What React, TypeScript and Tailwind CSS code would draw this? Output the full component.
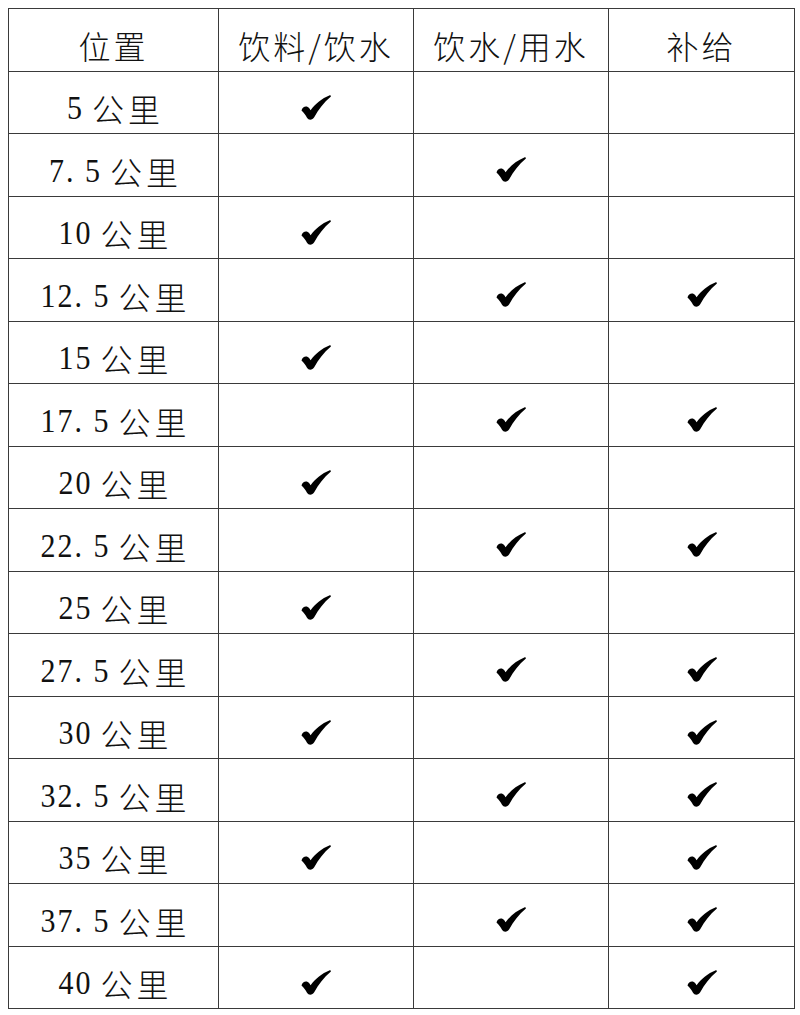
const rows: { km: string; drink: boolean; water: boolean; supply: boolean }[] = [
  { km: '5', drink: true, water: false, supply: false },
  { km: '7.5', drink: false, water: true, supply: false },
  { km: '10', drink: true, water: false, supply: false },
  { km: '12.5', drink: false, water: true, supply: true },
  { km: '15', drink: true, water: false, supply: false },
  { km: '17.5', drink: false, water: true, supply: true },
  { km: '20', drink: true, water: false, supply: false },
  { km: '22.5', drink: false, water: true, supply: true },
  { km: '25', drink: true, water: false, supply: false },
  { km: '27.5', drink: false, water: true, supply: true },
  { km: '30', drink: true, water: false, supply: true },
  { km: '32.5', drink: false, water: true, supply: true },
  { km: '35', drink: true, water: false, supply: true },
  { km: '37.5', drink: false, water: true, supply: true },
  { km: '40', drink: true, water: false, supply: true },
];

function Check({ on }: { on: boolean }) {
  if (!on) return null;
  return (
    <svg viewBox="0 0 30 25" className="inline-block w-[30px] h-[25px]" fill="#000">
      <path d="M0.5 15.5 C1.5 11.5 5.8 10 8.3 13.3 L9.6 15.2 C14.5 8.5 21 3.3 28.3 0.4 C29.6 -0.1 30.4 1.3 29.4 2.1 C23 7.5 17.5 14.5 13.2 22.3 C11.5 25.3 7.6 25.6 6 22.8 C4.5 20 3 17.8 0.5 15.5 Z" />
    </svg>
  );
}

const cell = 'border border-[#3a3a3a] h-[62.5px] p-0 text-center align-middle';

export default function App() {
  return (
    <div className="bg-white w-[800px] h-[1015px] pt-[8px] pl-[8px] text-[#111] font-['Noto_Sans_CJK_SC',sans-serif]">
      <table className="border-collapse table-fixed w-[786px]">
        <colgroup>
          <col className="w-[210px]" />
          <col className="w-[195px]" />
          <col className="w-[195px]" />
          <col className="w-[186px]" />
        </colgroup>
        <thead>
          <tr className="text-[32px] tracking-[3px] leading-none">
            <th className={cell + ' font-light pt-[10px]'}>位置</th>
            <th className={cell + ' font-light pt-[10px]'}>饮料/饮水</th>
            <th className={cell + ' font-light pt-[10px]'}>饮水/用水</th>
            <th className={cell + ' font-light pt-[10px]'}>补给</th>
          </tr>
        </thead>
        <tbody>
          {rows.map((r) => (
            <tr key={r.km} className="leading-none">
              <td className={cell + ' pt-[12px]'}>
                <span className="inline-flex items-center justify-center gap-[10px]">
                  <span className="inline-block font-['Liberation_Serif',serif] text-[30px] tracking-[2px] -mr-[2px] scale-y-[1.1] whitespace-pre">{r.km.replace('.', '. ')}</span>
                  <span className="text-[32px] font-light tracking-[4px] -mr-[4px]">公里</span>
                </span>
              </td>
              <td className={cell + ' pt-[10px]'}><Check on={r.drink} /></td>
              <td className={cell + ' pt-[10px]'}><Check on={r.water} /></td>
              <td className={cell + ' pt-[10px]'}><Check on={r.supply} /></td>
            </tr>
          ))}
        </tbody>
      </table>
    </div>
  );
}
